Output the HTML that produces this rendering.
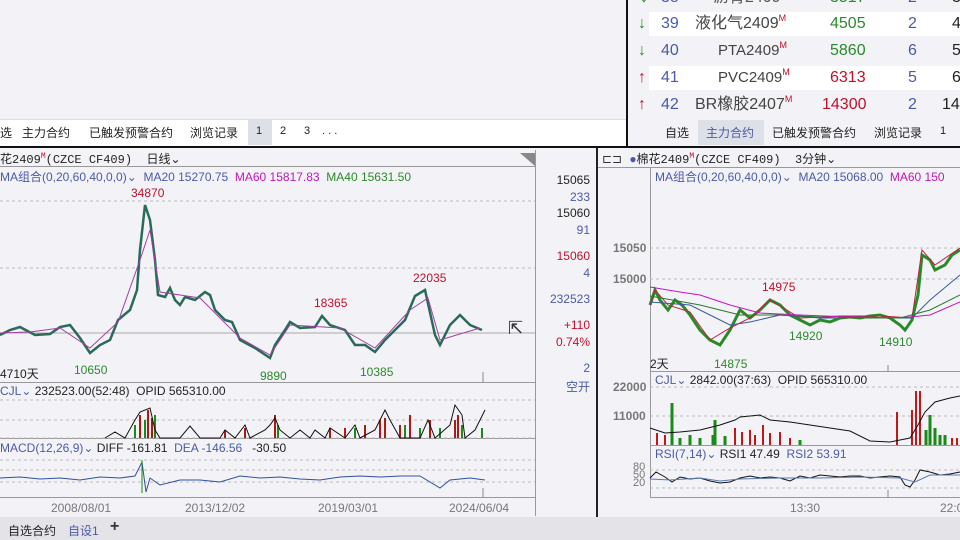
<!DOCTYPE html>
<html><head><meta charset="utf-8"><style>
*{margin:0;padding:0;box-sizing:border-box}
body{width:960px;height:540px;overflow:hidden;background:#f3f3f7;font-family:"Liberation Sans","Noto Sans CJK SC",sans-serif;font-size:12px;color:#222;position:relative}
.a{position:absolute;white-space:nowrap}
.cj{font-family:"Liberation Mono","Noto Sans CJK SC",monospace}
.bl{color:#4a5aa8}.mg{color:#c018b8}.gr{color:#2a8a2a}.rd{color:#c0102a}
.lst .a{line-height:20px}
.lst sup{font-size:9px;vertical-align:top;line-height:12px;position:relative;top:-2px}
</style></head><body>
<div class="a" style="left:0;top:0;width:626px;height:119px;background:#f3f3f7"></div>
<div class="a" style="left:0;top:119px;width:626px;height:28px;background:#fff;border-top:1px solid #ddd"></div>
<div class="a" style="left:0;top:124px;font-size:12px">选</div>
<div class="a" style="left:22px;top:124px">主力合约</div>
<div class="a" style="left:89px;top:124px">已触发预警合约</div>
<div class="a" style="left:190px;top:124px">浏览记录</div>
<div class="a" style="left:248px;top:120px;width:24px;height:25px;background:#dde0e6"></div>
<div class="a" style="left:256px;top:125px;font-size:11px">1</div>
<div class="a" style="left:280px;top:125px;font-size:11px">2</div>
<div class="a" style="left:304px;top:125px;font-size:11px">3</div>
<div class="a" style="left:322px;top:125px;font-size:11px">. . .</div>
<div class="a" style="left:626px;top:0;width:2px;height:148px;background:#111"></div>
<div class="a" style="left:628px;top:0;width:332px;height:119px;background:#f3f3f7"></div>
<div class="a" style="left:649px;top:12px;width:311px;height:24px;background:#fff"></div>
<div class="a" style="left:649px;top:66px;width:311px;height:24px;background:#fff"></div>
<div class="lst" style="font-size:16px">
<div class="a gr" style="left:640px;top:-12px">↓</div><div class="a bl" style="left:661px;top:-12px">38</div><div class="a" style="left:713px;top:-12px;color:#555">沥青2409</div><div class="a gr" style="left:830px;top:-12px">3517</div><div class="a bl" style="left:908px;top:-12px">2</div><div class="a" style="left:952px;top:-12px">3</div>
<div class="a gr" style="left:638px;top:14px">↓</div><div class="a bl" style="left:661px;top:14px">39</div><div class="a" style="left:695px;top:14px;color:#444">液化气2409<sup class="rd">M</sup></div><div class="a gr" style="left:830px;top:14px">4505</div><div class="a bl" style="left:908px;top:14px">2</div><div class="a" style="left:952px;top:14px">4</div>
<div class="a gr" style="left:638px;top:41px">↓</div><div class="a bl" style="left:661px;top:41px">40</div><div class="a" style="left:718px;top:41px;color:#444;font-size:15px">PTA2409<sup class="rd">M</sup></div><div class="a gr" style="left:830px;top:41px">5860</div><div class="a bl" style="left:908px;top:41px">6</div><div class="a" style="left:952px;top:41px">5</div>
<div class="a rd" style="left:638px;top:68px">↑</div><div class="a bl" style="left:661px;top:68px">41</div><div class="a" style="left:718px;top:68px;color:#444;font-size:15px">PVC2409<sup class="rd">M</sup></div><div class="a rd" style="left:830px;top:68px">6313</div><div class="a bl" style="left:908px;top:68px">5</div><div class="a" style="left:952px;top:68px">6</div>
<div class="a rd" style="left:638px;top:95px">↑</div><div class="a bl" style="left:661px;top:95px">42</div><div class="a" style="left:695px;top:95px;color:#444">BR橡胶2407<sup class="rd">M</sup></div><div class="a rd" style="left:822px;top:95px">14300</div><div class="a bl" style="left:908px;top:95px">2</div><div class="a" style="left:942px;top:95px">14</div>
</div>
<div class="a" style="left:628px;top:119px;width:332px;height:27px;background:#f3f3f7"></div>
<div class="a" style="left:698px;top:120px;width:66px;height:25px;background:#dde0e6"></div>
<div class="a" style="left:665px;top:124px">自选</div>
<div class="a bl" style="left:706px;top:124px">主力合约</div>
<div class="a" style="left:772px;top:124px">已触发预警合约</div>
<div class="a" style="left:874px;top:124px">浏览记录</div>
<div class="a" style="left:940px;top:125px;font-size:11px">1</div>
<div class="a" style="left:0;top:146px;width:960px;height:2px;background:#111"></div>

<div class="a" style="left:0;top:148px;width:596px;height:369px;background:#f3f3f7"></div>
<div class="a" style="left:535px;top:150px;width:1px;height:366px;background:#999"></div>
<div class="a" style="left:0;top:166px;width:535px;height:1px;background:#999"></div>
<div class="a" style="left:0;top:382px;width:535px;height:1px;background:#999"></div>
<div class="a" style="left:0;top:438px;width:535px;height:1px;background:#999"></div>
<div class="a" style="left:0;top:497px;width:535px;height:1px;background:#999"></div>
<div class="a" style="left:596px;top:148px;width:2px;height:370px;background:#222"></div>
<div class="a cj" style="left:0;top:150px;font-size:12px">花2409<sup class="rd" style="font-size:8px">M</sup>(CZCE CF409) &nbsp;日线⌄</div>
<div class="a" style="left:0;top:168px"><span class="bl">MA组合(0,20,60,40,0,0)⌄ &nbsp;MA20 15270.75</span> &nbsp;<span class="mg">MA60 15817.83</span> &nbsp;<span class="gr">MA40 15631.50</span></div>
<svg class="a" style="left:0;top:148px" width="596" height="370">
<g stroke="#bbb" stroke-dasharray="3,3"><line x1="0" y1="53" x2="535" y2="53"/><line x1="0" y1="120" x2="535" y2="120"/><line x1="0" y1="252" x2="535" y2="252"/><line x1="0" y1="272" x2="535" y2="272"/><line x1="0" y1="290" x2="535" y2="290"/><line x1="0" y1="312" x2="535" y2="312"/><line x1="0" y1="322" x2="535" y2="322"/><line x1="0" y1="334" x2="535" y2="334"/></g>
<line x1="0" y1="185" x2="535" y2="185" stroke="#aaa"/>
<path d="M520 5 L535 5 L535 18Z" fill="#888"/>
<g transform="translate(0,-148)">
<polyline fill="none" stroke="#2a6a5a" stroke-width="2.5" points="0,335 10,330 20,327 35,335 50,334 60,327 70,325 80,338 90,353 100,345 110,340 118,320 130,310 137,290 140,250 145,205 150,220 155,260 158,295 165,297 170,288 175,300 180,305 185,297 195,300 205,292 210,295 215,310 225,320 232,322 240,340 255,348 270,358 275,345 285,330 290,322 300,328 315,327 322,316 330,325 345,330 355,345 365,345 375,352 385,340 395,330 405,320 415,296 425,290 435,335 440,345 450,325 460,315 470,325 482,330"/>
<polyline fill="none" stroke="#a040a0" stroke-width="1" points="0,333 30,332 60,328 90,348 118,322 140,260 150,230 160,292 200,298 240,338 270,355 290,325 340,328 375,348 410,310 428,298 440,340 480,328"/>
<g stroke="#b01818" stroke-width="2"><line x1="140" y1="438" x2="140" y2="415"/><line x1="148" y1="438" x2="148" y2="410"/><line x1="152" y1="438" x2="152" y2="418"/><line x1="275" y1="438" x2="275" y2="415"/><line x1="330" y1="438" x2="330" y2="428"/><line x1="380" y1="438" x2="380" y2="420"/><line x1="410" y1="438" x2="410" y2="415"/><line x1="455" y1="438" x2="455" y2="420"/><line x1="400" y1="438" x2="400" y2="425"/><line x1="345" y1="438" x2="345" y2="428"/><line x1="365" y1="438" x2="365" y2="425"/><line x1="385" y1="438" x2="385" y2="418"/><line x1="430" y1="438" x2="430" y2="420"/><line x1="458" y1="438" x2="458" y2="415"/><line x1="245" y1="438" x2="245" y2="428"/><line x1="225" y1="438" x2="225" y2="430"/></g>
<g stroke="#1a8a1a" stroke-width="2"><line x1="145" y1="438" x2="145" y2="420"/><line x1="135" y1="438" x2="135" y2="425"/><line x1="155" y1="438" x2="155" y2="415"/><line x1="278" y1="438" x2="278" y2="425"/><line x1="355" y1="438" x2="355" y2="428"/><line x1="420" y1="438" x2="420" y2="428"/><line x1="482" y1="438" x2="482" y2="428"/><line x1="440" y1="438" x2="440" y2="428"/><line x1="405" y1="438" x2="405" y2="425"/><line x1="462" y1="438" x2="462" y2="425"/></g>
<polyline fill="none" stroke="#111" points="105,438 115,432 125,438 135,420 140,412 150,408 155,430 160,438 180,438 190,426 200,438 220,438 225,430 235,438 245,425 250,438 265,430 270,425 275,418 280,430 290,438 300,430 310,438 315,430 325,438 330,428 345,438 355,425 360,438 375,430 385,410 390,420 400,438 420,438 428,420 435,438 450,425 455,405 462,415 465,438 475,430 485,410"/>
<polyline fill="none" stroke="#3050a0" points="0,478 20,477 40,479 60,478 80,480 100,477 120,478 135,476 142,462 146,492 150,478 160,485 180,480 200,480 220,482 240,476 260,478 280,477 300,479 320,480 340,477 360,476 380,477 400,476 420,476 440,488 450,480 470,478 485,480"/>
<line x1="142" y1="460" x2="142" y2="493" stroke="#1a8a1a"/>
</g>
</svg>
<div class="a rd" style="left:131px;top:186px">34870</div>
<div class="a rd" style="left:314px;top:296px">18365</div>
<div class="a rd" style="left:413px;top:271px">22035</div>
<div class="a gr" style="left:74px;top:363px">10650</div>
<div class="a gr" style="left:260px;top:369px">9890</div>
<div class="a gr" style="left:360px;top:365px">10385</div>
<div class="a" style="left:0;top:365px">4710天</div>
<div class="a" style="left:0;top:384px"><span class="bl">CJL⌄</span> 232523.00(52:48) &nbsp;OPID 565310.00</div>
<div class="a" style="left:0;top:441px"><span class="bl">MACD(12,26,9)⌄</span> DIFF -161.81 &nbsp;<span class="bl">DEA -146.56</span> &nbsp; -30.50</div>
<div class="a" style="left:51px;top:501px;color:#777">2008/08/01</div>
<div class="a" style="left:185px;top:501px;color:#777">2013/12/02</div>
<div class="a" style="left:318px;top:501px;color:#777">2019/03/01</div>
<div class="a" style="left:449px;top:501px;color:#777">2024/06/04</div>
<div style="text-align:right">
<div class="a" style="right:370px;top:173px">15065</div>
<div class="a bl" style="right:370px;top:190px">233</div>
<div class="a" style="right:370px;top:206px">15060</div>
<div class="a bl" style="right:370px;top:223px">91</div>
<div class="a rd" style="right:370px;top:249px">15060</div>
<div class="a bl" style="right:370px;top:266px">4</div>
<div class="a bl" style="right:370px;top:292px">232523</div>
<div class="a rd" style="right:370px;top:318px">+110</div>
<div class="a rd" style="right:370px;top:335px">0.74%</div>
<div class="a bl" style="right:370px;top:361px">2</div>
<div class="a bl" style="right:370px;top:378px">空开</div>
</div>
<div class="a" style="left:508px;top:318px;font-size:18px;color:#333">⇱</div>

<div class="a" style="left:598px;top:148px;width:362px;height:369px;background:#f3f3f7"></div>
<div class="a" style="left:598px;top:167px;width:362px;height:1px;background:#999"></div>
<div class="a" style="left:650px;top:168px;width:1px;height:330px;background:#999"></div>
<div class="a" style="left:650px;top:371px;width:310px;height:1px;background:#999"></div>
<div class="a" style="left:650px;top:445px;width:310px;height:1px;background:#999"></div>
<div class="a" style="left:650px;top:497px;width:310px;height:1px;background:#999"></div>
<div class="a cj" style="left:602px;top:150px"><span style="color:#333">⊏⊐</span> <span class="bl">●</span>棉花2409<sup class="rd" style="font-size:8px">M</sup>(CZCE CF409) &nbsp;3分钟⌄</div>
<div class="a" style="left:655px;top:168px"><span class="bl">MA组合(0,20,60,40,0,0)⌄ &nbsp;MA20 15068.00</span> &nbsp;<span class="mg">MA60 150</span></div>
<div class="a" style="left:613px;top:241px;color:#777;font-weight:bold">15050</div>
<div class="a" style="left:613px;top:272px;color:#777;font-weight:bold">15000</div>
<div class="a" style="left:613px;top:380px;color:#777;font-weight:bold">22000</div>
<div class="a" style="left:613px;top:409px;color:#777;font-weight:bold">11000</div>
<div class="a" style="left:633px;top:463px;color:#777;font-size:11px;line-height:8px">80<br>50<br>20</div>
<svg class="a" style="left:0;top:0" width="960" height="540">
<g stroke="#bbb" stroke-dasharray="3,3"><line x1="650" y1="248" x2="960" y2="248"/><line x1="650" y1="279" x2="960" y2="279"/><line x1="650" y1="387" x2="960" y2="387"/><line x1="650" y1="416" x2="960" y2="416"/><line x1="650" y1="470" x2="960" y2="470"/><line x1="650" y1="488" x2="960" y2="488"/></g>
<polyline fill="none" stroke="#2a8a2a" stroke-width="3" points="650,305 655,290 660,300 668,310 675,300 682,305 690,315 700,330 710,340 720,345 730,330 740,310 750,318 760,310 770,300 780,305 790,315 800,320 810,325 820,320 830,322 840,318 850,317 860,318 870,316 880,315 890,318 900,325 905,330 912,320 918,295 922,255 930,260 935,270 945,265 952,255 960,250"/>
<polyline fill="none" stroke="#c02040" stroke-width="1" points="650,305 655,290 668,305 690,312 710,340 730,328 750,318 770,300 800,318 840,316 880,316 912,318 922,250 935,265 960,248"/>
<polyline fill="none" stroke="#c018b8" points="650,287 680,292 700,295 730,305 760,313 800,315 850,317 900,318 930,315 960,302"/>
<polyline fill="none" stroke="#3a5a9a" points="650,302 690,305 710,315 730,325 750,322 780,315 820,318 880,318 912,318 930,300 960,275"/>
<polyline fill="none" stroke="#2a7a2a" points="650,296 700,305 740,315 780,315 840,318 900,318 930,310 960,295"/>
<g stroke="#1a8a1a" stroke-width="3"><line x1="672" y1="445" x2="672" y2="403"/><line x1="715" y1="445" x2="715" y2="420"/><line x1="713" y1="445" x2="713" y2="435"/><line x1="930" y1="445" x2="930" y2="415"/><line x1="926" y1="445" x2="926" y2="430"/><line x1="945" y1="445" x2="945" y2="435"/><line x1="690" y1="445" x2="690" y2="435"/><line x1="680" y1="445" x2="680" y2="438"/><line x1="700" y1="445" x2="700" y2="438"/><line x1="725" y1="445" x2="725" y2="436"/><line x1="800" y1="445" x2="800" y2="440"/><line x1="935" y1="445" x2="935" y2="428"/><line x1="940" y1="445" x2="940" y2="435"/></g>
<g stroke="#c01818" stroke-width="2"><line x1="657" y1="445" x2="657" y2="433"/><line x1="665" y1="445" x2="665" y2="435"/><line x1="735" y1="445" x2="735" y2="428"/><line x1="750" y1="445" x2="750" y2="430"/><line x1="763" y1="445" x2="763" y2="425"/><line x1="780" y1="445" x2="780" y2="432"/><line x1="897" y1="445" x2="897" y2="412"/><line x1="916" y1="445" x2="916" y2="391"/><line x1="920" y1="445" x2="920" y2="391"/><line x1="912" y1="445" x2="912" y2="410"/><line x1="957" y1="445" x2="957" y2="438"/><line x1="742" y1="445" x2="742" y2="432"/><line x1="755" y1="445" x2="755" y2="435"/><line x1="770" y1="445" x2="770" y2="433"/><line x1="790" y1="445" x2="790" y2="438"/><line x1="952" y1="445" x2="952" y2="438"/></g>
<polyline fill="none" stroke="#111" points="650,428 665,433 680,432 700,430 720,425 735,420 740,417 760,415 770,420 790,422 810,425 830,428 850,431 870,441 890,442 900,440 910,438 918,425 925,412 935,402 950,398 960,396"/>
<polyline fill="none" stroke="#111" points="650,478 656,472 665,477 672,482 680,477 690,479 700,478 710,481 720,483 730,482 740,478 750,476 760,478 770,477 780,478 790,481 800,476 810,478 820,475 830,476 840,477 850,476 860,476 870,478 880,477 890,476 900,477 905,485 910,487 915,480 920,470 930,472 940,475 950,474 960,472"/>
<polyline fill="none" stroke="#5a7ab0" points="650,479 670,480 700,478 720,481 740,479 780,478 820,478 860,477 900,478 915,482 930,475 960,475"/>
<line x1="888" y1="365" x2="888" y2="371" stroke="#888"/>
<line x1="888" y1="490" x2="888" y2="497" stroke="#888"/>
<line x1="483" y1="372" x2="483" y2="382" stroke="#888"/>
<line x1="483" y1="488" x2="483" y2="497" stroke="#888"/>
</svg>
<div class="a rd" style="left:762px;top:280px">14975</div>
<div class="a gr" style="left:789px;top:329px">14920</div>
<div class="a gr" style="left:879px;top:335px">14910</div>
<div class="a gr" style="left:714px;top:357px">14875</div>
<div class="a" style="left:650px;top:355px">2天</div>
<div class="a" style="left:655px;top:373px"><span class="bl">CJL⌄</span> 2842.00(37:63) &nbsp;OPID 565310.00</div>
<div class="a" style="left:655px;top:447px"><span class="bl">RSI(7,14)⌄</span> RSI1 47.49 &nbsp;<span class="bl">RSI2 53.91</span></div>
<div class="a" style="left:790px;top:501px;color:#777">13:30</div>
<div class="a" style="left:940px;top:501px;color:#777">22:0</div>

<div class="a" style="left:0;top:517px;width:960px;height:23px;background:#e3e3e8"></div>
<div class="a" style="left:8px;top:522px">自选合约</div>
<div class="a bl" style="left:68px;top:522px">自设1</div>
<div class="a" style="left:110px;top:518px;font-size:16px;font-weight:bold;color:#333">+</div>
</body></html>
